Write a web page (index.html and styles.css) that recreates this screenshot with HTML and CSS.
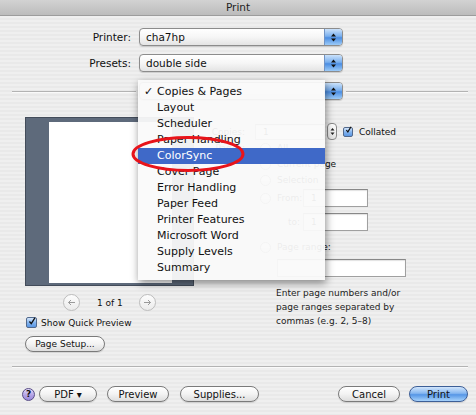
FILE: index.html
```html
<!DOCTYPE html>
<html>
<head>
<meta charset="utf-8">
<title>Print</title>
<link rel="stylesheet" href="styles.css">
</head>
<body>
<div class="window">
  <div class="titlebar">Print</div>
  <div class="sheet">
    <div class="field-row first">
      <span class="label">Printer:</span>
      <div class="popup"><span class="popup-text">cha7hp</span><span class="popup-arrows"><svg width="7" height="11" viewBox="0 0 7 11"><path d="M3.5 1.5L6 4.5H1Z M3.5 9.5L6 6.5H1Z" fill="#111"/></svg></span></div>
    </div>
    <div class="field-row">
      <span class="label">Presets:</span>
      <div class="popup"><span class="popup-text">double side</span><span class="popup-arrows"><svg width="7" height="11" viewBox="0 0 7 11"><path d="M3.5 1.5L6 4.5H1Z M3.5 9.5L6 6.5H1Z" fill="#111"/></svg></span></div>
    </div>
    <div class="panel-row">
      <div class="rule rule-left"></div>
      <div class="popup"><span class="popup-text panel-text">Copies &amp; Pages</span><span class="popup-arrows"><svg width="7" height="11" viewBox="0 0 7 11"><path d="M3.5 1.5L6 4.5H1Z M3.5 9.5L6 6.5H1Z" fill="#111"/></svg></span></div>
      <div class="rule rule-right"></div>
    </div>

    <div class="main">
      <div class="left">
        <div class="preview"><div class="page"></div></div>
        <div class="nav">
          <span class="nav-btn"><svg width="9" height="7" viewBox="0 0 9 7"><path d="M1.5 3.5H8 M1.5 3.5L4 1 M1.5 3.5L4 6" stroke="#9a9a9a" stroke-width="1" fill="none"/></svg></span>
          <span class="nav-text">1 of 1</span>
          <span class="nav-btn nav-next"><svg width="9" height="7" viewBox="0 0 9 7"><path d="M1 3.5H7.5 M7.5 3.5L5 1 M7.5 3.5L5 6" stroke="#9a9a9a" stroke-width="1" fill="none"/></svg></span>
        </div>
        <div class="check-row">
          <span class="checkbox"><svg width="11" height="11" viewBox="0 0 11 11"><path d="M2 5.5L4.5 8.5L9.5 0.5" stroke="#111" stroke-width="1.8" fill="none"/></svg></span>
          <span class="check-label">Show Quick Preview</span>
        </div>
        <div class="btn page-setup">Page Setup...</div>
      </div>

      <div class="right">
        <div class="copies-row">
          <span class="rlabel">Copies:</span>
          <span class="textfield copies-field">1</span>
          <span class="stepper"><svg width="5" height="11" viewBox="0 0 5 11"><path d="M2.5 2L4.5 4.5H0.5Z M2.5 9L4.5 6.5H0.5Z" fill="#222"/></svg></span>
          <span class="checkbox collated-box"><svg width="10" height="10" viewBox="0 0 11 11"><path d="M2 5.5L4.5 8.5L9.5 0.5" stroke="#111" stroke-width="1.8" fill="none"/></svg></span>
          <span class="rtext">Collated</span>
        </div>
        <div class="pages">
          <span class="rlabel pages-label">Pages:</span>
          <div class="radios">
            <div class="radio-row"><span class="radio"></span><span>All</span></div>
            <div class="radio-row"><span class="radio"></span><span>Current page</span></div>
            <div class="radio-row"><span class="radio"></span><span>Selection</span></div>
            <div class="radio-row from-row"><span class="radio"></span><span class="range-label">From:</span><span class="textfield range-field">1</span></div>
            <div class="radio-row to-row"><span class="radio-slot"></span><span class="range-label to-label">to:</span><span class="textfield range-field">1</span></div>
            <div class="radio-row range-row"><span class="radio"></span><span>Page range:</span></div>
            <div class="textfield page-range-field"></div>
            <p class="hint">Enter page numbers and/or<br>page ranges separated by<br>commas (e.g. 2, 5–8)</p>
          </div>
        </div>
      </div>
    </div>

    <div class="rule bottom-rule"></div>

    <div class="footer">
      <span class="help">?</span>
      <span class="btn pdf-btn">PDF ▾</span>
      <span class="btn preview-btn">Preview</span>
      <span class="btn supplies-btn">Supplies...</span>
      <span class="spacer"></span>
      <span class="btn cancel-btn">Cancel</span>
      <span class="btn print-btn">Print</span>
    </div>
  </div>

  <div class="menu">
    <div class="menu-item checked">Copies &amp; Pages</div>
    <div class="menu-item">Layout</div>
    <div class="menu-item">Scheduler</div>
    <div class="menu-item">Paper Handling</div>
    <div class="menu-item selected">ColorSync</div>
    <div class="menu-item">Cover Page</div>
    <div class="menu-item">Error Handling</div>
    <div class="menu-item">Paper Feed</div>
    <div class="menu-item">Printer Features</div>
    <div class="menu-item">Microsoft Word</div>
    <div class="menu-item">Supply Levels</div>
    <div class="menu-item">Summary</div>
  </div>

  <svg class="annotation" width="116" height="38" viewBox="0 0 116 38"><ellipse cx="57" cy="19" rx="55" ry="16.5" fill="none" stroke="#e8141a" stroke-width="3"/></svg>
</div>
</body>
</html>
```

FILE: styles.css
```css
* { box-sizing: border-box; }

html, body {
  margin: 0;
  padding: 0;
}

body {
  width: 476px;
  height: 415px;
  overflow: hidden;
  font-family: "DejaVu Sans", "Liberation Sans", sans-serif;
  color: #111;
}

.window {
  position: relative;
  width: 476px;
  height: 415px;
  background: repeating-linear-gradient(to bottom, #efefef 0, #efefef 2px, #e9e9e9 2px, #e9e9e9 4px);
}

.titlebar {
  height: 16px;
  background: linear-gradient(#d2d2d2, #bcbcbc);
  border-bottom: 1px solid #9c9c9c;
  text-align: center;
  font-size: 10.5px;
  line-height: 15px;
  color: #222;
}

.sheet {
  padding: 0 8px 0 12px;
}

.field-row {
  display: flex;
  align-items: center;
  height: 18px;
  margin-top: 8px;
}

.field-row.first {
  margin-top: 12px;
}

.label {
  width: 119px;
  margin-right: 8px;
  text-align: right;
  font-size: 10.5px;
}

.popup {
  display: flex;
  width: 204px;
  height: 18px;
  border: 1px solid #8c8c8c;
  border-radius: 4px;
  background: linear-gradient(#ffffff, #f6f6f6 50%, #e4e4e4);
  box-shadow: 0 1px 1px rgba(0, 0, 0, 0.15);
  overflow: hidden;
}

.popup-text {
  flex: 1;
  padding-left: 6px;
  font-size: 10.5px;
  line-height: 16px;
}

.popup-text.panel-text {
  padding-left: 17px;
  font-size: 11px;
}

.popup-arrows {
  width: 18px;
  display: flex;
  align-items: center;
  justify-content: center;
  border-left: 1px solid #7093c4;
  background: linear-gradient(#cbe2fb, #79afee 45%, #4b8de2 55%, #9ccbf8);
}

.panel-row {
  display: flex;
  align-items: center;
  height: 18px;
  margin-top: 10px;
}

.rule {
  height: 1px;
  background: #b3b3b3;
  box-shadow: 0 1px 0 #fafafa;
}

.rule-left {
  width: 124px;
  margin-right: 3px;
}

.rule-right {
  flex: 1;
  margin-left: 3px;
}

.main {
  display: flex;
  margin-top: 17px;
}

.left {
  width: 169px;
  margin-left: 13px;
}

.preview {
  width: 169px;
  height: 169px;
  padding: 4px 0 0 23px;
  background: #5e6a7b;
  border: 1px solid #434c5a;
}

.page {
  width: 123px;
  height: 161px;
  background: #fff;
}

.nav {
  display: flex;
  align-items: center;
  height: 17px;
  margin-top: 8px;
}

.nav-btn {
  width: 17px;
  height: 17px;
  margin-left: 38px;
  border: 1px solid #bdbdbd;
  border-radius: 50%;
  background: linear-gradient(#fdfdfd, #ebebeb);
  display: flex;
  align-items: center;
  justify-content: center;
}

.nav-text {
  margin-left: 17px;
  font-size: 9px;
}

.nav-btn.nav-next {
  margin-left: 16px;
}

.check-row {
  display: flex;
  align-items: center;
  margin-top: 6px;
  height: 11px;
}

.checkbox {
  width: 11px;
  height: 11px;
  margin-left: 1px;
  border: 1px solid #52698c;
  border-radius: 2px;
  background: linear-gradient(#d3e6fb, #84b4ee 50%, #5b97e3);
  display: flex;
  align-items: center;
  justify-content: center;
  overflow: visible;
}

.checkbox svg {
  margin-top: -3px;
  margin-left: 1px;
}

.check-label {
  margin-left: 4px;
  font-size: 9px;
}

.btn {
  display: flex;
  align-items: center;
  justify-content: center;
  height: 16px;
  border: 1px solid #7a7a7a;
  border-radius: 8px;
  background: linear-gradient(#ffffff, #f3f3f3 50%, #dddddd);
  box-shadow: 0 1px 1px rgba(0, 0, 0, 0.12);
  font-size: 10px;
  color: #111;
}

.page-setup {
  width: 80px;
  margin-top: 8px;
  font-size: 9px;
}

.right {
  width: 274px;
  margin-top: 6px;
  font-size: 9px;
}

.copies-row {
  display: flex;
  align-items: center;
  height: 17px;
}

.rlabel {
  width: 51px;
  margin-right: 10px;
  text-align: right;
  font-size: 9px;
  flex: none;
}

.textfield {
  display: block;
  background: #fff;
  border: 1px solid #a0a0a0;
  border-top-color: #888;
  box-shadow: inset 0 1px 1px rgba(0, 0, 0, 0.12);
  font-size: 9px;
  padding-left: 7px;
}

.copies-field {
  width: 70px;
  height: 16px;
  line-height: 14px;
}

.stepper {
  width: 10px;
  height: 17px;
  margin-left: 2px;
  border: 1px solid #8a8a8a;
  border-radius: 4px;
  background: linear-gradient(#ffffff, #e4e4e4);
  display: flex;
  align-items: center;
  justify-content: center;
}

.collated-box {
  width: 10px;
  height: 10px;
  margin-left: 6px;
}

.rtext {
  margin-left: 6px;
}

.pages {
  display: flex;
}

.rlabel.pages-label {
  margin-right: 15px;
  line-height: 16px;
}

.radios {
  display: flex;
  flex-direction: column;
}

.radio-row {
  display: flex;
  align-items: center;
  height: 16px;
}

.radio {
  width: 11px;
  height: 11px;
  margin-right: 6px;
  border: 1px solid #8a8a8a;
  border-radius: 50%;
  background: linear-gradient(#ffffff, #e2e2e2);
  flex: none;
}

.radio-slot {
  width: 17px;
  flex: none;
}

.from-row {
  height: 18px;
  margin-top: 1px;
}

.to-row {
  height: 18px;
  margin-top: 6px;
}

.range-row {
  margin-top: 8px;
}

.range-label {
  width: 26px;
  flex: none;
}

.to-label {
  text-align: right;
  padding-right: 3px;
}

.range-field {
  width: 65px;
  height: 18px;
  line-height: 16px;
}

.page-range-field {
  width: 129px;
  height: 18px;
  margin-top: 4px;
  margin-left: 17px;
}

.hint {
  margin: 9px 0 0 16px;
  font-size: 9px;
  line-height: 14px;
  color: #222;
}

.bottom-rule {
  margin-top: 14px;
}

.footer {
  display: flex;
  align-items: center;
  height: 16px;
  margin-top: 19px;
}

.help {
  width: 13px;
  height: 13px;
  margin-left: 10px;
  border: 1px solid #574b86;
  border-radius: 50%;
  background: linear-gradient(#e4dcfa, #b3a3e6 55%, #9a88da);
  font-size: 9px;
  font-weight: bold;
  line-height: 11px;
  text-align: center;
}

.pdf-btn {
  width: 58px;
  margin-left: 4px;
}

.preview-btn {
  width: 62px;
  margin-left: 10px;
}

.supplies-btn {
  width: 79px;
  margin-left: 11px;
}

.spacer {
  flex: 1;
}

.cancel-btn {
  width: 62px;
}

.print-btn {
  width: 59px;
  margin-left: 9px;
  border-color: #3d5f97;
  background: linear-gradient(#d2e6fc, #86b7f0 45%, #5596e6 55%, #a7d2fb);
}

.menu {
  position: absolute;
  left: 138px;
  top: 80px;
  width: 187px;
  padding: 4px 0;
  background: rgba(250, 250, 250, 0.94);
  box-shadow: 1px 3px 8px rgba(0, 0, 0, 0.45);
}

.menu-item {
  position: relative;
  height: 16px;
  line-height: 16px;
  padding-left: 19px;
  font-size: 11px;
  color: #111;
}

.menu-item.checked::before {
  content: "✓";
  position: absolute;
  left: 6px;
  top: 0;
}

.menu-item.selected {
  background: #3f69c8;
  color: #fff;
}

.annotation {
  position: absolute;
  left: 131px;
  top: 135px;
}
```
